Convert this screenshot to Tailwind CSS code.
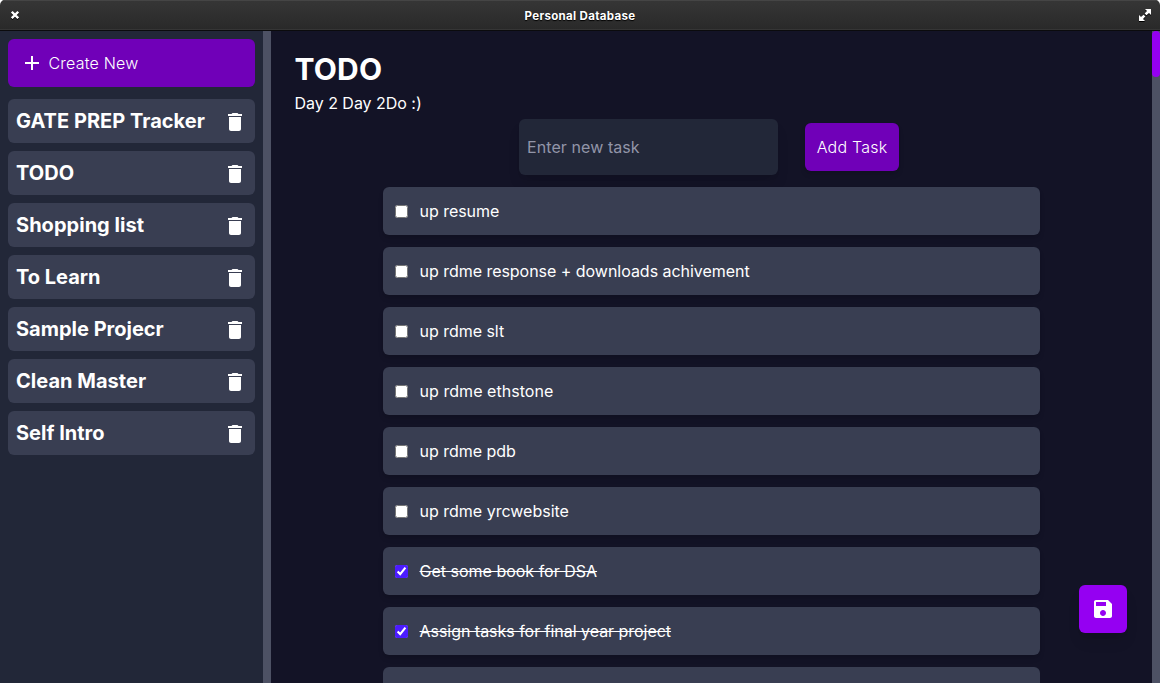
<!DOCTYPE html>
<html lang="en">
<head>
<meta charset="utf-8">
<title>Personal Database</title>
<script src="https://cdn.jsdelivr.net/npm/@tailwindcss/browser@4"></script>
</head>
<body class="bg-white font-['Inter',sans-serif] text-white">
<svg class="hidden">
  <symbol id="trash" viewBox="0 0 24 24"><path d="M6 19c0 1.1.9 2 2 2h8c1.1 0 2-.9 2-2V7H6v12zM19 4h-3.5l-1-1h-5l-1 1H5v2h14V4z"/></symbol>
</svg>
<div class="flex h-[683px] w-[1160px] flex-col overflow-hidden rounded-t-[5px]">
  <header class="flex h-[31px] shrink-0 items-center justify-between border-b border-[#0b0b0d] bg-linear-to-b from-[#363636] to-[#292929] pr-[9px] pl-[11px] shadow-[inset_0_1px_0_#454545,inset_0_-1px_0_#353535]">
    <svg class="size-2 drop-shadow-[0_1px_0_#000]" viewBox="0 0 8 8" stroke="#fff" stroke-width="2.3"><path d="M.8.8l6.4 6.4M7.2.8L.8 7.2"/></svg>
    <h1 class="pt-[2px] pl-[2px] text-[11.5px] leading-4 font-bold tracking-[0.33px] [text-shadow:0_1px_1px_#000]">Personal Database</h1>
    <svg class="size-3 drop-shadow-[0_1px_0_#000]" viewBox="0 0 12 12" fill="#fff"><path d="M6 0h6v6l-2-2-2.6 2.3-1.7-1.7L8 2zM0 6l2 2 2.6-2.3 1.7 1.7L4 10l2 2H0z"/></svg>
  </header>
  <div class="flex min-h-0 flex-1">
    <aside class="flex w-[263px] shrink-0 flex-col gap-2 bg-[#222738] p-2">
      <button class="mb-1 flex h-12 shrink-0 items-center gap-[4.5px] rounded-md bg-[#7000b8] pl-3 font-light tracking-[0.2px]">
        <svg class="size-6" viewBox="0 0 24 24" fill="#fff"><path d="M19 13h-6v6h-2v-6H5v-2h6V5h2v6h6v2z"/></svg>
        Create New
      </button>
      <div class="flex h-11 items-center justify-between rounded-md bg-[#393e52] pr-2 pl-2 text-xl font-bold tracking-[0.03px]"><span>GATE PREP Tracker</span><svg class="mt-[2px] size-6 fill-white"><use href="#trash"/></svg></div>
      <div class="flex h-11 items-center justify-between rounded-md bg-[#393e52] pr-2 pl-2 text-xl font-bold tracking-[0.03px]"><span>TODO</span><svg class="mt-[2px] size-6 fill-white"><use href="#trash"/></svg></div>
      <div class="flex h-11 items-center justify-between rounded-md bg-[#393e52] pr-2 pl-2 text-xl font-bold tracking-[0.03px]"><span>Shopping list</span><svg class="mt-[2px] size-6 fill-white"><use href="#trash"/></svg></div>
      <div class="flex h-11 items-center justify-between rounded-md bg-[#393e52] pr-2 pl-2 text-xl font-bold"><span>To Learn</span><svg class="mt-[2px] size-6 fill-white"><use href="#trash"/></svg></div>
      <div class="flex h-11 items-center justify-between rounded-md bg-[#393e52] pr-2 pl-2 text-xl font-bold"><span>Sample Projecr</span><svg class="mt-[2px] size-6 fill-white"><use href="#trash"/></svg></div>
      <div class="flex h-11 items-center justify-between rounded-md bg-[#393e52] pr-2 pl-2 text-xl font-bold tracking-[0.03px]"><span>Clean Master</span><svg class="mt-[2px] size-6 fill-white"><use href="#trash"/></svg></div>
      <div class="flex h-11 items-center justify-between rounded-md bg-[#393e52] pr-2 pl-2 text-xl font-bold"><span>Self Intro</span><svg class="mt-[2px] size-6 fill-white"><use href="#trash"/></svg></div>
    </aside>
    <div class="w-2 shrink-0 bg-[#4d5164]"></div>
    <main class="relative min-w-0 flex-1 overflow-hidden bg-[#131326] pt-5 pl-[23.5px]">
      <h2 class="text-3xl font-bold tracking-[0.2px]">TODO</h2>
      <p class="h-8 pt-1 tracking-[-0.03px]">Day 2 Day 2Do :)</p>
      <div class="ml-[224.5px] flex items-center gap-[27px]">
        <input class="h-14 w-[259px] rounded-md bg-[#222738] px-2 tracking-[0.08px] shadow-lg placeholder:text-[#9295a8]" placeholder="Enter new task">
        <button class="h-12 w-[94px] rounded-md bg-[#7000b8] font-light tracking-[0.2px] shadow-md">Add Task</button>
      </div>
      <div class="mt-3 ml-[88.5px] flex w-[657px] flex-col gap-3 tracking-[-0.03px]">
        <label class="flex h-12 shrink-0 items-center gap-[11.5px] rounded-md bg-[#393e52] px-3 shadow-md"><input type="checkbox" class="size-[13px] accent-[#4c1cff]">up resume</label>
        <label class="flex h-12 shrink-0 items-center gap-[11.5px] rounded-md bg-[#393e52] px-3 shadow-md"><input type="checkbox" class="size-[13px] accent-[#4c1cff]">up rdme response + downloads achivement</label>
        <label class="flex h-12 shrink-0 items-center gap-[11.5px] rounded-md bg-[#393e52] px-3 shadow-md"><input type="checkbox" class="size-[13px] accent-[#4c1cff]">up rdme slt</label>
        <label class="flex h-12 shrink-0 items-center gap-[11.5px] rounded-md bg-[#393e52] px-3 shadow-md"><input type="checkbox" class="size-[13px] accent-[#4c1cff]"><span class="tracking-[0.05px]">up rdme ethstone</span></label>
        <label class="flex h-12 shrink-0 items-center gap-[11.5px] rounded-md bg-[#393e52] px-3 shadow-md"><input type="checkbox" class="size-[13px] accent-[#4c1cff]">up rdme pdb</label>
        <label class="flex h-12 shrink-0 items-center gap-[11.5px] rounded-md bg-[#393e52] px-3 shadow-md"><input type="checkbox" class="size-[13px] accent-[#4c1cff]"><span class="tracking-normal">up rdme yrcwebsite</span></label>
        <label class="flex h-12 shrink-0 items-center gap-[11.5px] rounded-md bg-[#393e52] px-3 shadow-md"><input type="checkbox" checked class="size-[13px] accent-[#4c1cff]"><span class="tracking-normal line-through">Get some book for DSA</span></label>
        <label class="flex h-12 shrink-0 items-center gap-[11.5px] rounded-md bg-[#393e52] px-3 shadow-md"><input type="checkbox" checked class="size-[13px] accent-[#4c1cff]"><span class="line-through">Assign tasks for final year project</span></label>
        <div class="h-12 shrink-0 rounded-md bg-[#393e52]"></div>
      </div>
      <button class="absolute right-[25px] bottom-[50px] flex size-12 items-center justify-center rounded-md bg-[#9500f2] shadow-lg">
        <svg class="size-6" viewBox="0 0 24 24" fill="#fff"><path d="M17 3H5c-1.11 0-2 .9-2 2v14c0 1.1.89 2 2 2h14c1.1 0 2-.9 2-2V7l-4-4zm-5 16c-1.66 0-3-1.34-3-3s1.34-3 3-3 3 1.34 3 3-1.34 3-3 3zm3-10H5V5h10v4z"/></svg>
      </button>
    </main>
    <div class="w-2 shrink-0 bg-[#4d5164]"><div class="h-[46px] rounded-[4px] bg-[#9500f2]"></div></div>
  </div>
</div>
</body>
</html>
